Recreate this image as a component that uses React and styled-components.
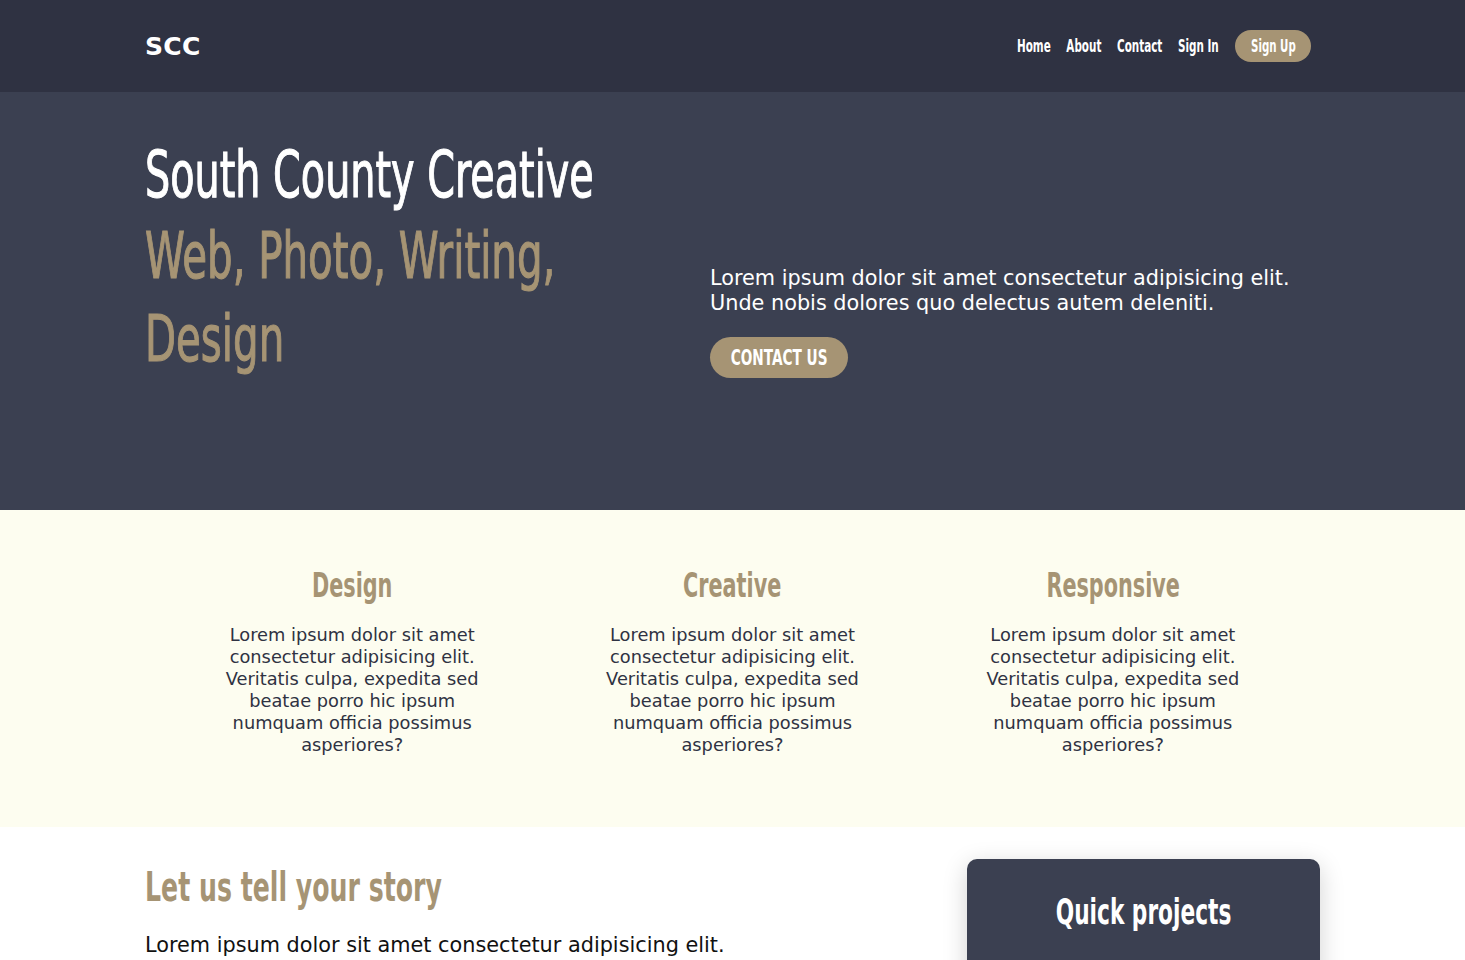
import React from "react";
import styled, { createGlobalStyle } from "styled-components";

const GlobalStyle = createGlobalStyle`
  * { box-sizing: border-box; }
  body {
    margin: 0;
    font-family: "DejaVu Sans", "Open Sans", sans-serif;
    color: #2f3242;
    background: #ffffff;
  }
  h1, h2, h3, p { margin: 0; }
`;

// no condensed display face is installed, so the narrow headings are
// DejaVu Sans Condensed squeezed horizontally
const heading = `"DejaVu Sans Condensed", "DejaVu Sans", sans-serif`;

const Container = styled.div`
  width: 1175px;
  margin: 0 auto;
`;

const NavBar = styled.header`
  background: #2f3242;
  height: 92px;
`;

const NavInner = styled(Container)`
  height: 100%;
  display: flex;
  align-items: center;
  justify-content: space-between;
`;

const Logo = styled.div`
  color: #ffffff;
  font-family: "DejaVu Sans", sans-serif;
  font-weight: 700;
  font-size: 25px;
  letter-spacing: 0.3px;
`;

const NavRight = styled.div`
  display: flex;
  align-items: center;
  gap: 16px;
  margin-right: 9px;
`;

const NavLinks = styled.nav`
  display: flex;
  align-items: center;
  gap: 23px;
  transform: scaleX(0.68);
  transform-origin: right center;
`;

const NavLink = styled.a`
  font-family: ${heading};
  font-weight: 700;
  font-size: 17px;
  color: #ffffff;
  text-decoration: none;
  white-space: nowrap;
`;

const PillButton = styled.a`
  display: inline-flex;
  align-items: center;
  justify-content: center;
  width: ${(p) => (p.$big ? "138px" : "76px")};
  height: ${(p) => (p.$big ? "41px" : "32px")};
  background: #a69474;
  color: #ffffff;
  border-radius: 999px;
  text-decoration: none;
  font-family: ${heading};
  font-weight: 700;
  font-size: ${(p) => (p.$big ? "22px" : "17px")};
`;

const PillLabel = styled.span`
  display: inline-block;
  flex-shrink: 0;
  white-space: nowrap;
  transform: scaleX(${(p) => p.$k});
`;

const Hero = styled.section`
  background: #3b4051;
  height: 418px;
`;

const HeroInner = styled(Container)`
  display: grid;
  grid-template-columns: 565px 1fr;
  padding-top: 44px;
`;

const HeroTitle = styled.h1`
  font-family: ${heading};
  font-weight: 400;
  font-size: 64px;
  line-height: 79px;
  color: #ffffff;
  white-space: nowrap;
  -webkit-text-stroke: 1.1px currentColor;
  transform: scaleX(0.69);
  transform-origin: left center;
`;

const HeroSub = styled.h2`
  font-family: ${heading};
  font-weight: 400;
  font-size: 64px;
  line-height: 83px;
  color: #a69474;
  white-space: nowrap;
  -webkit-text-stroke: 1.1px currentColor;
  transform: scaleX(0.7);
  transform-origin: left center;
`;

const HeroSide = styled.div`
  padding-top: 130px;
  display: flex;
  flex-direction: column;
  align-items: flex-start;
  gap: 21px;
`;

const HeroText = styled.p`
  color: #ffffff;
  font-size: 20.8px;
  line-height: 25px;
`;

const Features = styled.section`
  background: #fdfdf0;
  height: 317px;
  padding-top: 56px;
`;

const FeatureGrid = styled.div`
  width: 1141px;
  margin: 0 auto;
  display: grid;
  grid-template-columns: repeat(3, 1fr);
`;

const Feature = styled.div`
  text-align: center;
  padding: 0 55px;
`;

const FeatureTitle = styled.h3`
  font-family: ${heading};
  font-weight: 700;
  font-size: 33px;
  line-height: 40px;
  color: #a69474;
  margin-bottom: 18px;
  white-space: nowrap;
  transform: scaleX(0.7);
`;

const FeatureText = styled.p`
  font-size: 17.8px;
  line-height: 22px;
  color: #2f3242;
`;

const Story = styled.section`
  background: #ffffff;
  padding-top: 32px;
  padding-bottom: 60px;
`;

const StoryInner = styled(Container)`
  display: grid;
  grid-template-columns: 1fr 353px;
  gap: 40px;
`;

const StoryTitle = styled.h2`
  font-family: ${heading};
  font-weight: 700;
  font-size: 40px;
  line-height: 50px;
  color: #a69474;
  margin-top: 3px;
  margin-bottom: 18px;
  white-space: nowrap;
  transform: scaleX(0.7);
  transform-origin: left center;
`;

const StoryText = styled.p`
  font-size: 20.8px;
  line-height: 30px;
  color: #111111;
`;

const Card = styled.aside`
  background: #3b4051;
  border-radius: 10px;
  box-shadow: 0 6px 24px rgba(0, 0, 0, 0.18);
  padding: 33px 28px 60px;
  color: #ffffff;
`;

const CardTitle = styled.h3`
  font-family: ${heading};
  font-weight: 700;
  font-size: 36px;
  line-height: 40px;
  text-align: center;
  white-space: nowrap;
  transform: scaleX(0.67);
`;

const featureText =
  "Lorem ipsum dolor sit amet consectetur adipisicing elit. Veritatis culpa, expedita sed beatae porro hic ipsum numquam officia possimus asperiores?";

const features = ["Design", "Creative", "Responsive"];

export default function App() {
  return (
    <>
      <GlobalStyle />
      <NavBar>
        <NavInner>
          <Logo>SCC</Logo>
          <NavRight>
            <NavLinks>
              <NavLink href="#">Home</NavLink>
              <NavLink href="#">About</NavLink>
              <NavLink href="#">Contact</NavLink>
              <NavLink href="#">Sign In</NavLink>
            </NavLinks>
            <PillButton href="#">
              <PillLabel $k={0.67}>Sign Up</PillLabel>
            </PillButton>
          </NavRight>
        </NavInner>
      </NavBar>
      <Hero>
        <HeroInner>
          <div>
            <HeroTitle>South County Creative</HeroTitle>
            <HeroSub>
              Web, Photo, Writing,
              <br />
              Design
            </HeroSub>
          </div>
          <HeroSide>
            <HeroText>
              Lorem ipsum dolor sit amet consectetur adipisicing elit.
              <br />
              Unde nobis dolores quo delectus autem deleniti.
            </HeroText>
            <PillButton href="#" $big>
              <PillLabel $k={0.69}>CONTACT US</PillLabel>
            </PillButton>
          </HeroSide>
        </HeroInner>
      </Hero>
      <Features>
        <FeatureGrid>
          {features.map((f) => (
            <Feature key={f}>
              <FeatureTitle>{f}</FeatureTitle>
              <FeatureText>{featureText}</FeatureText>
            </Feature>
          ))}
        </FeatureGrid>
      </Features>
      <Story>
        <StoryInner>
          <div>
            <StoryTitle>Let us tell your story</StoryTitle>
            <StoryText>
              Lorem ipsum dolor sit amet consectetur adipisicing elit.
            </StoryText>
          </div>
          <Card>
            <CardTitle>Quick projects</CardTitle>
          </Card>
        </StoryInner>
      </Story>
    </>
  );
}
